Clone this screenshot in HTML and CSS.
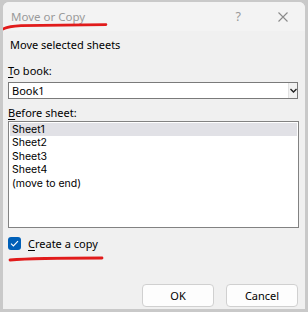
FILE: index.html
```html
<!DOCTYPE html>
<html lang="en">
<head>
  <meta charset="UTF-8">
  <title>Move or Copy</title>
  <link rel="stylesheet" href="styles.css">
</head>
<body>

<div class="dialog">
  <div class="titlebar">
    <span class="title">Move or Copy</span>
    <span class="help">?</span>
    <svg class="close" width="10" height="10" viewBox="0 0 10 10">
      <path d="M0.5 0.5 L9.5 9.5 M9.5 0.5 L0.5 9.5" stroke="#8a8a8a" stroke-width="1.1" fill="none"/>
    </svg>
  </div>

  <div class="content">
    <div class="line intro">Move selected sheets</div>

    <div class="line label"><u>T</u>o book:</div>
    <div class="select">
      <span class="select-value">Book1</span>
      <span class="select-arrow">
        <svg width="7" height="5" viewBox="0 0 7 5">
          <path d="M0.5 1 L3.5 4 L6.5 1" stroke="#222" stroke-width="1.4" fill="none"/>
        </svg>
      </span>
    </div>

    <div class="line label before"><u>B</u>efore sheet:</div>
    <div class="listbox">
      <div class="item selected">Sheet1</div>
      <div class="item">Sheet2</div>
      <div class="item">Sheet3</div>
      <div class="item">Sheet4</div>
      <div class="item">(move to end)</div>
    </div>

    <div class="check-row">
      <span class="checkbox">
        <svg width="9" height="7" viewBox="0 0 9 7">
          <path d="M1 3.6 L3.4 6 L8 1.2" stroke="#fff" stroke-width="1.1" fill="none"/>
        </svg>
      </span>
      <span><u>C</u>reate a copy</span>
    </div>

    <div class="buttons">
      <button class="btn">OK</button>
      <button class="btn">Cancel</button>
    </div>
  </div>

  <!-- annotation strokes -->
  <svg class="mark mark-title" width="108" height="10" viewBox="0 0 108 10">
    <path d="M1 7.5 C5 5 10 4 20 3.6 L105 2.6" stroke="#e11b1b" stroke-width="2.6" stroke-linecap="round" fill="none"/>
  </svg>
  <svg class="mark mark-copy" width="96" height="8" viewBox="0 0 96 8">
    <path d="M2 5 C20 3.5 40 3 94 3" stroke="#e11b1b" stroke-width="2.8" stroke-linecap="round" fill="none"/>
  </svg>
</div>

</body>
</html>
```

FILE: styles.css
```css
* {
  box-sizing: border-box;
}
body {
  margin: 0;
  padding: 2px 3px 3px 3px;
  background: #c9c9c9;
  font-family: 'Segoe UI', 'Noto Sans', sans-serif;
  font-size: 11px;
  color: #000;
}
.dialog {
  position: relative;
  width: 302px;
  height: 307px;
  background: #f0f0f0;
  border-radius: 6px 6px 0 0;
  overflow: hidden;
}
.titlebar {
  display: flex;
  align-items: center;
  height: 29px;
  padding: 0 0 0 8px;
  background: #f3f3f3;
}
.title {
  flex: 1;
  color: #9a9a9a;
  font-size: 11.5px;
}
.help {
  color: #9a9a9a;
  font-size: 12.5px;
  margin-right: 37px;
}
.close {
  margin-right: 17px;
}
.content {
  display: flex;
  flex-direction: column;
  padding: 6px 6px 0 5px;
}
.line {
  height: 16px;
  line-height: 16px;
  white-space: nowrap;
}
.intro {
  margin-left: 2px;
}
.label {
  margin-top: 10px;
  margin-bottom: 3px;
}
.label u, .check-row u {
  text-underline-offset: 2px;
}
.before {
  margin-top: 6px;
  margin-bottom: 0;
}
.select {
  display: flex;
  height: 17px;
  background: #fff;
  border: 1px solid #7a7a7a;
  margin-right: 1px;
}
.select-value {
  flex: 1;
  padding-left: 3px;
  line-height: 15px;
}
.select-arrow {
  display: flex;
  align-items: center;
  justify-content: center;
  width: 9px;
  background: #f2f2f2;
  border-left: 1px solid #e2e2e2;
}
.listbox {
  height: 107px;
  background: #fff;
  border: 1px solid #828282;
  padding: 1px 1px 0 1px;
}
.item {
  height: 13.4px;
  line-height: 13.4px;
  padding-left: 2px;
  font-family: 'Inter', 'Noto Sans', sans-serif;
  font-size: 10.5px;
}
.item.selected {
  background: #e1e1e6;
}
.check-row {
  display: flex;
  align-items: center;
  gap: 7px;
  margin-top: 8px;
  height: 14px;
}
.checkbox {
  display: flex;
  align-items: center;
  justify-content: center;
  width: 13px;
  height: 13px;
  border-radius: 3px;
  background: #0060b8;
}
.buttons {
  display: flex;
  justify-content: flex-end;
  gap: 12px;
  margin-top: 34px;
  padding-right: 1px;
}
.btn {
  width: 72px;
  height: 23px;
  font-family: inherit;
  font-size: 11px;
  color: #000;
  background: #fdfdfd;
  border: 1px solid #d0d0d0;
  border-radius: 4px;
  padding: 0;
}
.mark {
  position: absolute;
  pointer-events: none;
}
.mark-title {
  left: -2px;
  top: 20px;
}
.mark-copy {
  left: 5px;
  top: 253px;
}
```
